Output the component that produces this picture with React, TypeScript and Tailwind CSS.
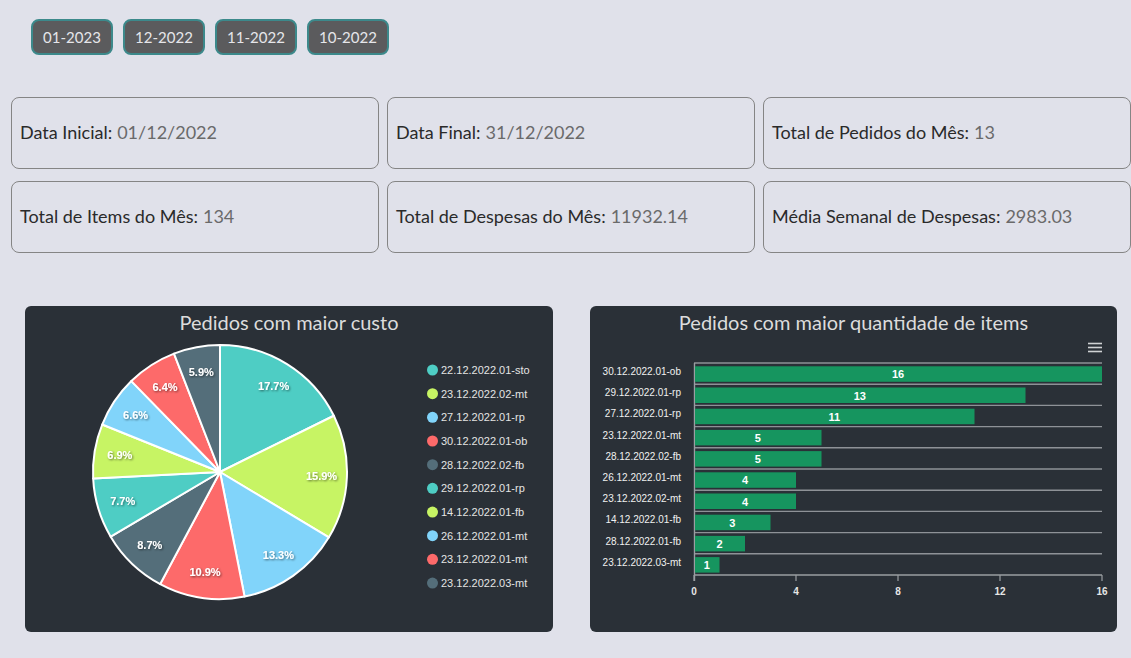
import React from "react";

const months = ["01-2023", "12-2022", "11-2022", "10-2022"];

const cards = [
  ["Data Inicial:", "01/12/2022"],
  ["Data Final:", "31/12/2022"],
  ["Total de Pedidos do Mês:", "13"],
  ["Total de Items do Mês:", "134"],
  ["Total de Despesas do Mês:", "11932.14"],
  ["Média Semanal de Despesas:", "2983.03"],
];

const palette = ["#4ecdc4", "#c7f464", "#81d4fa", "#fd6a6a", "#546e7a"];

const pieData = [
  { label: "22.12.2022.01-sto", v: 17.7 },
  { label: "23.12.2022.02-mt", v: 15.9 },
  { label: "27.12.2022.01-rp", v: 13.3 },
  { label: "30.12.2022.01-ob", v: 10.9 },
  { label: "28.12.2022.02-fb", v: 8.7 },
  { label: "29.12.2022.01-rp", v: 7.7 },
  { label: "14.12.2022.01-fb", v: 6.9 },
  { label: "26.12.2022.01-mt", v: 6.6 },
  { label: "23.12.2022.01-mt", v: 6.4 },
  { label: "23.12.2022.03-mt", v: 5.9 },
];

const barData = [
  { label: "30.12.2022.01-ob", v: 16 },
  { label: "29.12.2022.01-rp", v: 13 },
  { label: "27.12.2022.01-rp", v: 11 },
  { label: "23.12.2022.01-mt", v: 5 },
  { label: "28.12.2022.02-fb", v: 5 },
  { label: "26.12.2022.01-mt", v: 4 },
  { label: "23.12.2022.02-mt", v: 4 },
  { label: "14.12.2022.01-fb", v: 3 },
  { label: "28.12.2022.01-fb", v: 2 },
  { label: "23.12.2022.03-mt", v: 1 },
];

const AR = "'Liberation Sans', Arial, sans-serif";

function PieChart() {
  const cx = 195;
  const cy = 136;
  const r = 127;
  let acc = 0;
  const pt = (frac: number, rad: number) => {
    const a = frac * 2 * Math.PI;
    return [cx + rad * Math.sin(a), cy - rad * Math.cos(a)];
  };
  const slices = pieData.map((d, i) => {
    const f0 = acc / 100;
    acc += d.v;
    const f1 = acc / 100;
    const [x0, y0] = pt(f0, r);
    const [x1, y1] = pt(f1, r);
    const large = f1 - f0 > 0.5 ? 1 : 0;
    const path = `M ${cx} ${cy} L ${x0} ${y0} A ${r} ${r} 0 ${large} 1 ${x1} ${y1} Z`;
    const [lx, ly] = pt((f0 + f1) / 2, r * 0.8);
    return { path, color: palette[i % 5], lx, ly, v: d.v };
  });
  return (
    <svg width="528" height="296" className="block">
      <defs>
        <filter id="ds" x="-20%" y="-20%" width="140%" height="140%">
          <feDropShadow dx="1" dy="1" stdDeviation="0.8" floodColor="#000" floodOpacity="0.55" />
        </filter>
      </defs>
      {slices.map((s, i) => (
        <path key={i} d={s.path} fill={s.color} stroke="#ffffff" strokeWidth="2" strokeLinejoin="round" />
      ))}
      {slices.map((s, i) => (
        <text
          key={"t" + i}
          x={s.lx}
          y={s.ly + 4}
          textAnchor="middle"
          fill="#ffffff"
          fontFamily={AR}
          fontSize="11"
          fontWeight="bold"
          filter="url(#ds)"
        >
          {s.v.toFixed(1)}%
        </text>
      ))}
      {pieData.map((d, i) => {
        const y = 34 + i * 23.67;
        return (
          <g key={"l" + i}>
            <circle cx="407.5" cy={y} r="5.5" fill={palette[i % 5]} />
            <text x="416" y={y + 4} fill="#e4e4e4" fontFamily={AR} fontSize="11">
              {d.label}
            </text>
          </g>
        );
      })}
    </svg>
  );
}

function BarChart() {
  const x0 = 104;
  const scale = 25.5;
  const top = 27;
  const band = 21.2;
  const bottom = top + band * 10;
  const gridColor = "#8e9297";
  return (
    <svg width="527" height="296" className="block">
      <g stroke="#cfd2d4" strokeWidth="1.6">
        <line x1="498" x2="512" y1="7.5" y2="7.5" />
        <line x1="498" x2="512" y1="11.5" y2="11.5" />
        <line x1="498" x2="512" y1="15.5" y2="15.5" />
      </g>
      {Array.from({ length: 11 }).map((_, i) => (
        <line
          key={"g" + i}
          x1={x0}
          x2={x0 + 16 * scale}
          y1={top + i * band}
          y2={top + i * band}
          stroke={i === 10 ? "#9a9ea2" : gridColor}
          strokeWidth="1.4"
        />
      ))}
      <line x1={x0 + 0.5} x2={x0 + 0.5} y1={top} y2={bottom + 6} stroke="#9a9ea2" strokeWidth="1.4" />
      {[0, 4, 8, 12, 16].map((t) => (
        <g key={"x" + t}>
          <line x1={x0 + t * scale} x2={x0 + t * scale} y1={bottom} y2={bottom + 6} stroke="#9a9ea2" strokeWidth="1.2" />
          <text
            x={x0 + t * scale}
            y={bottom + 20}
            textAnchor="middle"
            fill="#e6e6e6"
            fontFamily={AR}
            fontSize="10"
            fontWeight="bold"
          >
            {t}
          </text>
        </g>
      ))}
      {barData.map((d, i) => {
        const y = top + i * band + 3.3;
        const w = d.v * scale;
        return (
          <g key={"b" + i}>
            <rect x={x0 + 1} y={y} width={w - 1} height="15.5" fill="#16955f" />
            <text
              x={x0 + w / 2}
              y={y + 12}
              textAnchor="middle"
              fill="#ffffff"
              fontFamily={AR}
              fontSize="11"
              fontWeight="bold"
            >
              {d.v}
            </text>
            <text
              x="91"
              y={top + i * band + 12}
              textAnchor="end"
              fill="#f0f0f0"
              fontFamily={AR}
              fontSize="10"
            >
              {d.label}
            </text>
          </g>
        );
      })}
    </svg>
  );
}

export default function App() {
  return (
    <div
      className="w-[1131px] h-[658px] overflow-hidden bg-[#e0e1ea]"
      style={{ fontFamily: "Lato, 'Noto Sans', sans-serif" }}
    >
      <div className="flex gap-[10px] pl-[31px] pt-[19px]">
        {months.map((m) => (
          <div
            key={m}
            className="w-[82px] h-[36px] flex items-center justify-center rounded-[8px] border-2 border-[#3c898b] bg-[#5b5b5d] text-[15px] text-[#e6e6ea]"
          >
            {m}
          </div>
        ))}
      </div>
      <div className="grid grid-cols-[368px_368px_368px] gap-x-[8px] gap-y-[12px] pl-[11px] mt-[42px]">
        {cards.map(([k, v]) => (
          <div
            key={k}
            className="h-[72px] rounded-[8px] border border-[#858585] flex items-center pl-[8px] pb-[1px] text-[18px]"
          >
            <span className="text-[#2a2a2a]">{k}</span>
            <span className="text-[#6a6a6a] ml-[5px]">{v}</span>
          </div>
        ))}
      </div>
      <div className="flex gap-[37px] pl-[25px] mt-[53px]">
        <div className="w-[528px] h-[326px] rounded-[6px] bg-[#2a3037] flex flex-col">
          <div className="h-[30px] flex items-center justify-center text-[20px] text-[#dcdcdc] pt-[1px]">
            Pedidos com maior custo
          </div>
          <PieChart />
        </div>
        <div className="w-[527px] h-[326px] rounded-[6px] bg-[#2a3037] flex flex-col">
          <div className="h-[30px] flex items-center justify-center text-[20px] text-[#dcdcdc] pt-[1px]">
            Pedidos com maior quantidade de items
          </div>
          <BarChart />
        </div>
      </div>
    </div>
  );
}
